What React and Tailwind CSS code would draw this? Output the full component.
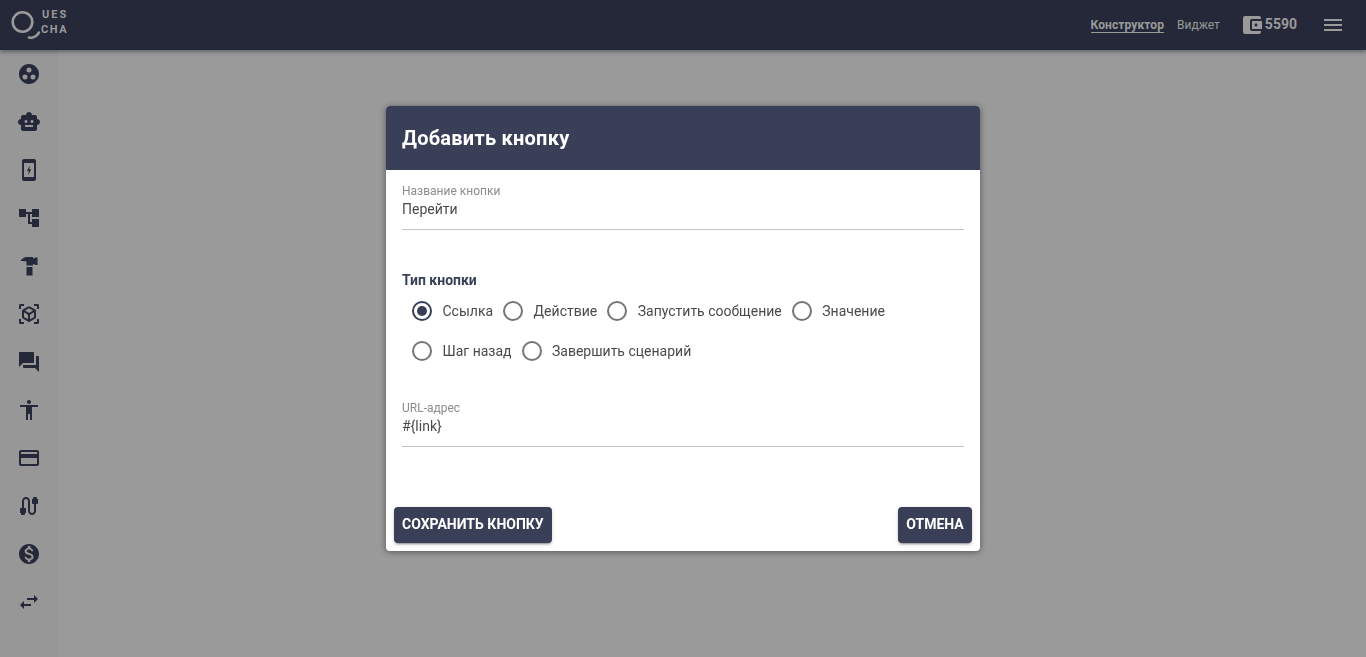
import {
  MdGroupWork, MdSmartToy, MdAccountTree, MdViewInAr, MdForum, MdAccessibility,
  MdCreditCard, MdCable, MdMonetizationOn, MdSwapHoriz, MdAccountBalanceWallet, MdMenu,
} from 'react-icons/md'

function PhoneBolt({ size = 24 }) {
  return (
    <svg width={size} height={size} viewBox="0 0 24 24" fill="currentColor">
      <path d="M17 1.010L7 1C5.900 1 5 1.900 5 3v18c0 1.100.9 2 2 2h10c1.100 0 2-.9 2-2V3c0-1.100-.9-1.990-2-1.990zM17 19H7V5h10v14z" />
      <path d="M12.800 7.500L10 13h1.700l-.4 4 2.900-5.700h-1.800z" />
    </svg>
  )
}

function Hammer({ size = 24 }) {
  return (
    <svg width={size} height={size} viewBox="0 0 24 24" fill="currentColor">
      <path d="M3.500 7C5 4.500 7.500 3 10 3h6v1.500L19 3.500h1.500V11H19l-3-1v1.500H9.500V7.500C8 7 6 6.700 3.500 7z" />
      <rect x="9.500" y="13" width="6" height="8.500" />
    </svg>
  )
}

const NAV = [
  MdGroupWork, MdSmartToy, PhoneBolt, MdAccountTree, Hammer, MdViewInAr,
  MdForum, MdAccessibility, MdCreditCard, MdCable, MdMonetizationOn, MdSwapHoriz,
]

function Logo() {
  return (
    <div className="relative w-[70px] h-[40px] text-[#9a9a9a]">
      <svg width="44" height="40" viewBox="0 0 44 40" className="absolute left-0 top-0" fill="none" stroke="currentColor" strokeWidth="2.600">
        <circle cx="22.500" cy="22" r="9.800" />
        <path d="M29 37.500c4 .8 8-1.500 10-5" strokeLinecap="round" />
      </svg>
      <span className="absolute left-[42px] top-[8px] text-[11px] leading-[13px] font-bold tracking-[2px]">UES</span>
      <span className="absolute left-[41px] top-[23px] text-[11px] leading-[13px] font-bold tracking-[1.6px]">CHA</span>
    </div>
  )
}

function Radio({ label, checked }) {
  return (
    <label className="flex items-center h-10 pl-[10px]">
      <span className={`w-5 h-5 rounded-full border-2 flex items-center justify-center ${checked ? 'border-[#3a3f58]' : 'border-[#757575]'}`}>
        {checked && <span className="w-2.5 h-2.5 rounded-full bg-[#3a3f58]" />}
      </span>
      <span className="ml-[10.5px] text-sm text-[#4a4a4a]">{label}</span>
    </label>
  )
}

function Field({ label, value, className }) {
  return (
    <div className={`border-b border-[#c2c2c2] ${className}`}>
      <div className="text-xs leading-[14px] text-[#8c8c8c]">{label}</div>
      <div className="text-sm leading-[20px] text-[#4a4a4a] mt-[1px]">{value}</div>
    </div>
  )
}

export default function App() {
  return (
    <div className="h-[657px] w-full flex flex-col bg-[#9a9a9a] overflow-hidden font-['Roboto',sans-serif]">
      <header className="h-[50px] shrink-0 bg-[#242838] flex items-start justify-between shadow-[0_2px_4px_rgba(0,0,0,0.35)] z-10">
        <Logo />
        <div className="flex items-center h-[50px] text-[#9a9a9a]">
          <span className="text-xs font-bold tracking-[0.1px] border-b border-[#9a9a9a] leading-[14px] mr-[13px]">Конструктор</span>
          <span className="text-xs leading-[14px] mr-[20px]">Виджет</span>
          <MdAccountBalanceWallet size={24} />
          <span className="text-sm font-bold -mt-[2px] ml-[1px] mr-[24px]">5590</span>
          <MdMenu size={24} className="mr-[21px]" />
        </div>
      </header>

      <div className="flex flex-1">
        <nav className="w-[58px] bg-[#979797] flex flex-col items-center text-[#242838]">
          {NAV.map((Icon, i) => (
            <div key={i} className="h-12 w-full flex items-center justify-center pr-[1px]"><Icon size={24} /></div>
          ))}
        </nav>
      </div>

      {/* Dialog */}
      <div className="fixed inset-0 z-20 flex justify-center pt-[106px] pointer-events-none">
        <div className="w-[594px] h-[445px] bg-white rounded flex flex-col shadow-[0_1px_6px_rgba(0,0,0,0.45)]">
          <div className="h-16 shrink-0 bg-[#3a3f58] rounded-t flex items-center px-4 text-white text-xl font-bold tracking-[0.25px]">Добавить кнопку</div>
          <div className="flex-1 px-4 pt-[14px]">
            <Field label="Название кнопки" value="Перейти" className="h-[46px]" />
            <div className="text-sm font-bold text-[#3a3f58] mt-[40px] leading-[20px]">Тип кнопки</div>
            <div className="flex flex-wrap mt-[1px]">
              <Radio label="Ссылка" checked />
              <Radio label="Действие" />
              <Radio label="Запустить сообщение" />
              <Radio label="Значение" />
              <div className="w-full" />
              <Radio label="Шаг назад" />
              <Radio label="Завершить сценарий" />
            </div>
            <div className="mt-[30px]"><Field label="URL-адрес" value="#{link}" className="h-[46px]" /></div>
          </div>
          <div className="flex justify-between px-2 pb-2">
            <button className="h-9 px-2 pb-[2px] rounded bg-[#3a3f58] text-white text-sm font-bold uppercase shadow-[0_3px_1px_-2px_rgba(0,0,0,0.2),0_2px_2px_0_rgba(0,0,0,0.14),0_1px_5px_0_rgba(0,0,0,0.12)]">Сохранить кнопку</button>
            <button className="h-9 w-[74px] pb-[2px] rounded bg-[#3a3f58] text-white text-sm font-bold uppercase shadow-[0_3px_1px_-2px_rgba(0,0,0,0.2),0_2px_2px_0_rgba(0,0,0,0.14),0_1px_5px_0_rgba(0,0,0,0.12)]">Отмена</button>
          </div>
        </div>
      </div>
    </div>
  )
}
